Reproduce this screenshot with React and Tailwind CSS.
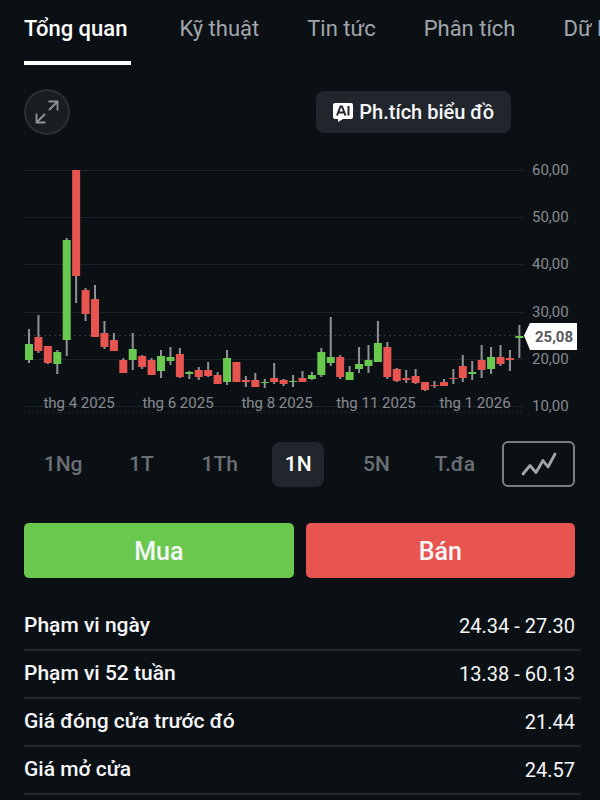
import { useState } from 'react';

const TABS = ['Tổng quan', 'Kỹ thuật', 'Tin tức', 'Phân tích', 'Dữ l'];

const PERIODS = ['1Ng', '1T', '1Th', '1N', '5N', 'T.đa'];

const STATS = [
    { label: 'Phạm vi ngày', value: '24.34 - 27.30' },
    { label: 'Phạm vi 52 tuần', value: '13.38 - 60.13' },
    { label: 'Giá đóng cửa trước đó', value: '21.44' },
    { label: 'Giá mở cửa', value: '24.57' },
];

const GRID = [
    { y: 10, label: '60,00' },
    { y: 57, label: '50,00' },
    { y: 104, label: '40,00' },
    { y: 152, label: '30,00' },
    { y: 199, label: '20,00' },
    { y: 246, label: '10,00' },
];

const MONTHS = [
    { x: 79, label: 'thg 4 2025' },
    { x: 178, label: 'thg 6 2025' },
    { x: 277, label: 'thg 8 2025' },
    { x: 376, label: 'thg 11 2025' },
    { x: 475, label: 'thg 1 2026' },
];

// [wick top, body top, body bottom, wick bottom, up]
const CANDLES = [
    [169, 184, 200, 203, 1],
    [155, 177, 191, 193, 0],
    [186, 186, 203, 204, 0],
    [190, 192, 204, 214, 1],
    [78, 80, 180, 196, 1],
    [10, 10, 116, 143, 0],
    [128, 130, 154, 161, 0],
    [125, 139, 177, 177, 0],
    [161, 173, 187, 189, 0],
    [173, 180, 191, 191, 0],
    [198, 200, 213, 213, 0],
    [173, 189, 200, 210, 1],
    [195, 196, 207, 209, 0],
    [198, 200, 215, 215, 0],
    [190, 196, 211, 218, 1],
    [187, 197, 201, 205, 1],
    [188, 194, 217, 218, 0],
    [211, 212, 214, 219, 1],
    [207, 210, 217, 220, 0],
    [202, 210, 216, 217, 0],
    [212, 215, 224, 224, 0],
    [190, 198, 222, 225, 1],
    [202, 202, 222, 222, 0],
    [216, 220, 222, 227, 0],
    [213, 220, 227, 227, 0],
    [219, 222, 223, 228, 1],
    [203, 218, 222, 224, 0],
    [219, 220, 224, 226, 0],
    [215, 221, 222, 227, 1],
    [211, 218, 222, 222, 0],
    [212, 215, 219, 220, 1],
    [188, 192, 215, 217, 1],
    [157, 197, 203, 206, 1],
    [195, 197, 217, 219, 0],
    [206, 212, 220, 220, 1],
    [187, 204, 209, 213, 1],
    [185, 200, 206, 213, 1],
    [161, 183, 202, 202, 1],
    [182, 187, 217, 219, 0],
    [208, 209, 221, 222, 0],
    [210, 218, 220, 223, 0],
    [209, 216, 223, 224, 0],
    [222, 222, 230, 231, 0],
    [221, 225, 226, 228, 0],
    [219, 222, 226, 226, 0],
    [209, 218, 219, 224, 0],
    [195, 206, 218, 222, 0],
    [201, 212, 214, 220, 1],
    [185, 200, 210, 218, 0],
    [187, 197, 209, 214, 1],
    [185, 197, 204, 206, 0],
    [190, 198, 200, 211, 0],
    [165, 176, 178, 198, 1],
];

function ExpandIcon() {
    return (
        <svg viewBox="0 0 24 24" className="w-6 h-6" fill="none" stroke="currentColor" strokeWidth="1.8">
            <path d="M13.500 1.500h9v9M22.500 1.500l-8.500 8.500M1.500 13.500v9h9M1.500 22.500l8.500-8.500" />
        </svg>
    );
}

function AiIcon() {
    return (
        <svg viewBox="0 0 20 20" className="w-5 h-5" aria-hidden="true">
            <path
                d="M2 1h16a2 2 0 0 1 2 2v12a2 2 0 0 1-2 2h-8l-5 3v-3H2a2 2 0 0 1-2-2V3a2 2 0 0 1 2-2z"
                fill="#fff"
            />
            <path d="M4 13.500 7.500 4.500h1.500l3.500 9M5.500 10.500h5.500M15.500 4v9.500" fill="none" stroke="#22282f" strokeWidth="2" />
        </svg>
    );
}

function LineChartIcon() {
    return (
        <svg viewBox="0 0 36 24" className="w-9 h-6" fill="none" stroke="currentColor" strokeWidth="2.800">
            <path d="M2 22 9 13.500l6 7 7-12 5 6.500L34 2" strokeLinejoin="round" strokeLinecap="round" />
        </svg>
    );
}

function PriceChart() {
    return (
        <svg viewBox="0 0 600 256" className="block w-full font-['Roboto',sans-serif]" role="img" aria-label="25,08">
            {GRID.map((line) => (
                <g key={line.label}>
                    <path d={`M24 ${line.y + 0.5}H524`} stroke="#1c2228" />
                    <text x="532" y={line.y + 5} fontSize="15" fill="#878b90">
                        {line.label}
                    </text>
                </g>
            ))}
            <path d="M24 252.500H524" stroke="#20262c" strokeDasharray="2 2" />
            <path d="M24 175.500H524" stroke="#30363b" strokeDasharray="2 3" />

            {CANDLES.map(([high, top, bottom, low, up], i) => {
                const x = 29 + i * 9.43;
                return (
                    <g key={i}>
                        <rect x={x - 1} y={high} width="2" height={low - high} fill="#8f9296" />
                        <rect x={x - 4} y={top} width="8" height={bottom - top} fill={up ? '#69c84e' : '#e8544f'} />
                    </g>
                );
            })}

            {MONTHS.map((month) => (
                <text key={month.label} x={month.x} y="248" fontSize="15" fill="#878b90" textAnchor="middle">
                    {month.label}
                </text>
            ))}

            {/* Last price */}
            <path d="M524 175.500 530 163H577V190H530z" fill="#fff" />
            <text x="554" y="182" fontSize="15" fontWeight="700" fill="#55585c" textAnchor="middle">
                25,08
            </text>
        </svg>
    );
}

function App() {
    const [tab, setTab] = useState('Tổng quan');
    const [period, setPeriod] = useState('1N');

    return (
        <main className="min-h-screen overflow-hidden bg-[#0b1015] text-[#f5f6f7] font-['Roboto',sans-serif]">
            <nav className="flex gap-12 h-[65px] pl-6 overflow-hidden whitespace-nowrap text-[22px]">
                {TABS.map((name) => (
                    <button
                        key={name}
                        onClick={() => setTab(name)}
                        className={
                            name === tab
                                ? 'shrink-0 pb-1 pr-1 border-b-4 border-white font-medium text-white'
                                : 'shrink-0 pb-1 border-b-4 border-transparent text-[#a2a6ab]'
                        }
                    >
                        {name}
                    </button>
                ))}
            </nav>

            <div className="flex items-center justify-between pt-6 pl-6 pr-[89px]">
                <button
                    aria-label="Mở rộng"
                    className="flex items-center justify-center w-[46px] h-[46px] rounded-full border-2 border-[#2b3035] bg-[#181d22] text-[#8f9398]"
                >
                    <ExpandIcon />
                </button>
                <button className="flex items-center gap-1.5 h-[42px] px-[17px] rounded-lg bg-[#20262c] text-[20px] font-medium">
                    <AiIcon />
                    Ph.tích biểu đồ
                </button>
            </div>

            <div className="pt-[25px]">
                <PriceChart />
            </div>

            <div className="flex items-center gap-2 pt-[25px] pl-6 pr-[25px]">
                <div className="flex flex-1 text-[21px] font-medium">
                    {PERIODS.map((name) => (
                        <div key={name} className="flex flex-1 justify-center">
                            <button
                                onClick={() => setPeriod(name)}
                                className={
                                    name === period
                                        ? 'w-[52px] h-[45px] pt-0.5 rounded-lg bg-[#20262c] text-white'
                                        : 'w-[52px] h-[45px] pt-0.5 text-[#6a6f75]'
                                }
                            >
                                {name}
                            </button>
                        </div>
                    ))}
                </div>
                <button
                    aria-label="Kiểu biểu đồ"
                    className="flex items-center justify-center w-[73px] h-[46px] rounded-md border-2 border-[#7b7f84] text-[#a2a6ab]"
                >
                    <LineChartIcon />
                </button>
            </div>

            <div className="flex gap-3 pt-9 pl-6 pr-[25px] text-[25px] font-medium">
                <button className="flex-1 h-[55px] pt-0.5 rounded-[5px] bg-[#6ac84f]">Mua</button>
                <button className="flex-1 h-[55px] pt-0.5 rounded-[5px] bg-[#e8544f]">Bán</button>
            </div>

            <div className="pt-6 pl-6 pr-[19px]">
                <table className="w-full">
                    <tbody>
                        {STATS.map((row) => (
                            <tr key={row.label} className="h-12 border-b-2 border-[#22282e]">
                                <th scope="row" className="text-left text-[21px] font-medium">
                                    {row.label}
                                </th>
                                <td className="pr-[6px] text-right text-[20px]">{row.value}</td>
                            </tr>
                        ))}
                    </tbody>
                </table>
            </div>
        </main>
    );
}

export default App;
